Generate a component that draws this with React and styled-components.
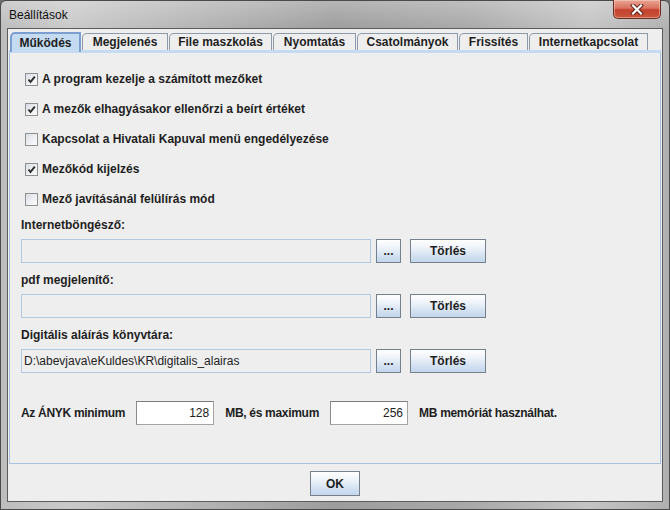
import React, { useState } from "react";
import styled, { createGlobalStyle } from "styled-components";

const GlobalStyle = createGlobalStyle`
  html, body {
    margin: 0;
    padding: 0;
    background: #6e6e6e;
  }
  body {
    font-family: "Liberation Sans", Arial, sans-serif;
    font-size: 12px;
    color: #1e1e1e;
  }
`;

const TABS = [
  { label: "Működés", w: 71 },
  { label: "Megjelenés", w: 86 },
  { label: "File maszkolás", w: 103 },
  { label: "Nyomtatás", w: 83 },
  { label: "Csatolmányok", w: 101 },
  { label: "Frissítés", w: 69 },
  { label: "Internetkapcsolat", w: 119 },
];

const OPTIONS = [
  { label: "A program kezelje a számított mezőket", checked: true },
  { label: "A mezők elhagyásakor ellenőrzi a beírt értéket", checked: true },
  { label: "Kapcsolat a Hivatali Kapuval menü engedélyezése", checked: false },
  { label: "Mezőkód kijelzés", checked: true },
  { label: "Mező javításánál felülírás mód", checked: false },
];

const PATHS = [
  { label: "Internetböngésző:", value: "" },
  { label: "pdf megjelenítő:", value: "" },
  { label: "Digitális aláírás könyvtára:", value: "D:\\abevjava\\eKuldes\\KR\\digitalis_alairas" },
];

const Window = styled.div`
  width: 670px;
  height: 510px;
  box-sizing: border-box;
  display: flex;
  flex-direction: column;
  padding: 0 6px 7px 6px;
  border: 1px solid #4a4a4a;
  border-radius: 6px 6px 0 0;
  background:
    linear-gradient(180deg, rgba(255, 255, 255, 0.25) 0px, rgba(255, 255, 255, 0) 28px),
    linear-gradient(90deg, #bdbdbd 0%, #c9c9c9 10%, #b3b3b3 30%, #9d9d9d 50%, #a9a9a9 70%, #c4c4c4 88%, #b0b0b0 100%);
`;

const TitleBar = styled.div`
  height: 27px;
  display: flex;
  justify-content: space-between;
  align-items: flex-start;
`;

const Title = styled.span`
  font-family: "Liberation Sans", Arial, sans-serif;
  font-size: 12px;
  color: #111;
  line-height: 29px;
  padding-left: 2px;
`;

const CloseButton = styled.div`
  width: 48px;
  height: 19px;
  margin-top: -1px;
  margin-right: 2px;
  box-sizing: border-box;
  display: flex;
  align-items: center;
  justify-content: center;
  border: 1px solid #6b2a22;
  border-top: none;
  border-radius: 0 0 5px 5px;
  background: linear-gradient(180deg, #e9a595 0%, #d9725f 45%, #c2412c 55%, #c8553d 100%);
  box-shadow: inset 0 0 0 1px rgba(255, 220, 210, 0.45);
`;

const Body = styled.div`
  flex: 1;
  display: flex;
  flex-direction: column;
  background: #eeeeee;
  border: 1px solid #5c5c5c;
  padding-top: 4px;
`;

const TabStrip = styled.div`
  display: flex;
  height: 17px;
  padding-left: 4px;
  position: relative;
  z-index: 1;
`;

const Tab = styled.div`
  width: ${(p) => p.w}px;
  box-sizing: border-box;
  display: flex;
  align-items: center;
  justify-content: center;
  font-weight: bold;
  font-size: 12px;
  color: #1e1e1e;
  border: 1px solid ${(p) => (p.active ? "#7c9fcf" : "#8c9aab")};
  border-bottom: none;
  border-top-left-radius: 5px;
  background: ${(p) => (p.active ? "#c5dbf2" : "#eeeeee")};
  margin-right: 1px;
  ${(p) =>
    p.active &&
    `
    height: 20px;
    margin-top: -1px;
    margin-left: -2px;
    border-width: 2px;
    border-bottom: none;
  `}
`;

const Panel = styled.div`
  flex: 1;
  margin: 0 1px;
  border: 1px solid #a9c2df;
  border-top: 3px solid #c5dbf2;
  padding: 16px 11px 0 11px;
  display: flex;
  flex-direction: column;
`;

const OptionList = styled.div`
  display: flex;
  flex-direction: column;
  gap: 10px;
  padding-left: 4px;
`;

const OptionRow = styled.label`
  display: flex;
  align-items: center;
  gap: 4px;
  height: 20px;
  font-weight: bold;
  font-size: 12px;
  cursor: default;
`;

const Box = styled.span`
  width: 13px;
  height: 13px;
  box-sizing: border-box;
  border: 1px solid #8e8f8f;
  background: linear-gradient(135deg, #d9dde3 0%, #eef0f3 55%, #fbfbfb 100%);
  display: flex;
  align-items: center;
  justify-content: center;
`;

const PathGroups = styled.div`
  display: flex;
  flex-direction: column;
  gap: 10px;
  margin-top: 9px;
`;

const PathGroup = styled.div`
  display: flex;
  flex-direction: column;
  gap: 7px;
`;

const FieldLabel = styled.div`
  font-weight: bold;
  font-size: 12px;
  line-height: 14px;
`;

const FieldRow = styled.div`
  display: flex;
  align-items: center;
  height: 24px;
`;

const PathInput = styled.div`
  width: 350px;
  height: 24px;
  box-sizing: border-box;
  border: 1px solid #b4c8de;
  background: #eeeeee;
  padding-left: 2px;
  display: flex;
  align-items: center;
  font-size: 12px;
  color: #222;
`;

const Button = styled.button`
  width: ${(p) => p.w}px;
  height: ${(p) => p.h || 24}px;
  margin-left: ${(p) => p.ml || 0}px;
  box-sizing: border-box;
  padding: 0;
  border: 1px solid #76808c;
  background: linear-gradient(180deg, #ffffff 0%, #eef3f9 35%, #d4e2f2 70%, #c3d6ec 100%);
  font-family: "Liberation Sans", Arial, sans-serif;
  font-weight: bold;
  font-size: 12px;
  color: #1e1e1e;
  display: flex;
  align-items: center;
  justify-content: center;
`;

const MemoryRow = styled.div`
  display: flex;
  align-items: center;
  gap: 11px;
  height: 24px;
  margin-top: 28px;
  font-weight: bold;
  font-size: 12px;
`;

const MemoryText = styled.span`
  letter-spacing: -0.3px;
`;

const NumberInput = styled.div`
  width: 78px;
  height: 24px;
  box-sizing: border-box;
  border: 1px solid #a3a3a3;
  border-top-color: #7d7d7d;
  border-left-color: #8a8a8a;
  background: #ffffff;
  display: flex;
  align-items: center;
  justify-content: flex-end;
  padding-right: 4px;
  font-weight: normal;
  font-size: 12px;
  color: #222;
`;

const Footer = styled.div`
  height: 37px;
  display: flex;
  justify-content: center;
  padding-top: 7px;
  box-sizing: border-box;
`;

const CheckMark = () => (
  <svg width="9" height="9" viewBox="0 0 9 9">
    <path d="M1.5 4.5 L3.5 7 L7.8 1.6" fill="none" stroke="#2b2b2b" strokeWidth="1.9" />
  </svg>
);

const CloseGlyph = () => (
  <svg width="14" height="11" viewBox="0 0 14 11">
    <path d="M3 1.5 L11 9.5 M11 1.5 L3 9.5" stroke="#5a1d15" strokeWidth="4" strokeLinecap="square" />
    <path d="M3 1.5 L11 9.5 M11 1.5 L3 9.5" stroke="#ffffff" strokeWidth="2.2" strokeLinecap="square" />
  </svg>
);

const App = () => {
  const [active] = useState(0);

  return (
    <>
      <GlobalStyle />
      <Window>
        <TitleBar>
          <Title>Beállítások</Title>
          <CloseButton>
            <CloseGlyph />
          </CloseButton>
        </TitleBar>
        <Body>
          <TabStrip>
            {TABS.map((t, i) => (
              <Tab key={t.label} w={t.w} active={i === active}>
                {t.label}
              </Tab>
            ))}
          </TabStrip>
          <Panel>
            <OptionList>
              {OPTIONS.map((o) => (
                <OptionRow key={o.label}>
                  <Box>{o.checked && <CheckMark />}</Box>
                  {o.label}
                </OptionRow>
              ))}
            </OptionList>

            <PathGroups>
              {PATHS.map((p) => (
                <PathGroup key={p.label}>
                  <FieldLabel>{p.label}</FieldLabel>
                  <FieldRow>
                    <PathInput>{p.value}</PathInput>
                    <Button w={25} ml={5}>...</Button>
                    <Button w={76} ml={9}>Törlés</Button>
                  </FieldRow>
                </PathGroup>
              ))}
            </PathGroups>

            <MemoryRow>
              <MemoryText>Az ÁNYK minimum</MemoryText>
              <NumberInput>128</NumberInput>
              <MemoryText>MB, és maximum</MemoryText>
              <NumberInput>256</NumberInput>
              <MemoryText>MB memóriát használhat.</MemoryText>
            </MemoryRow>
          </Panel>
          <Footer>
            <Button w={50} h={25}>OK</Button>
          </Footer>
        </Body>
      </Window>
    </>
  );
};

export default App;
